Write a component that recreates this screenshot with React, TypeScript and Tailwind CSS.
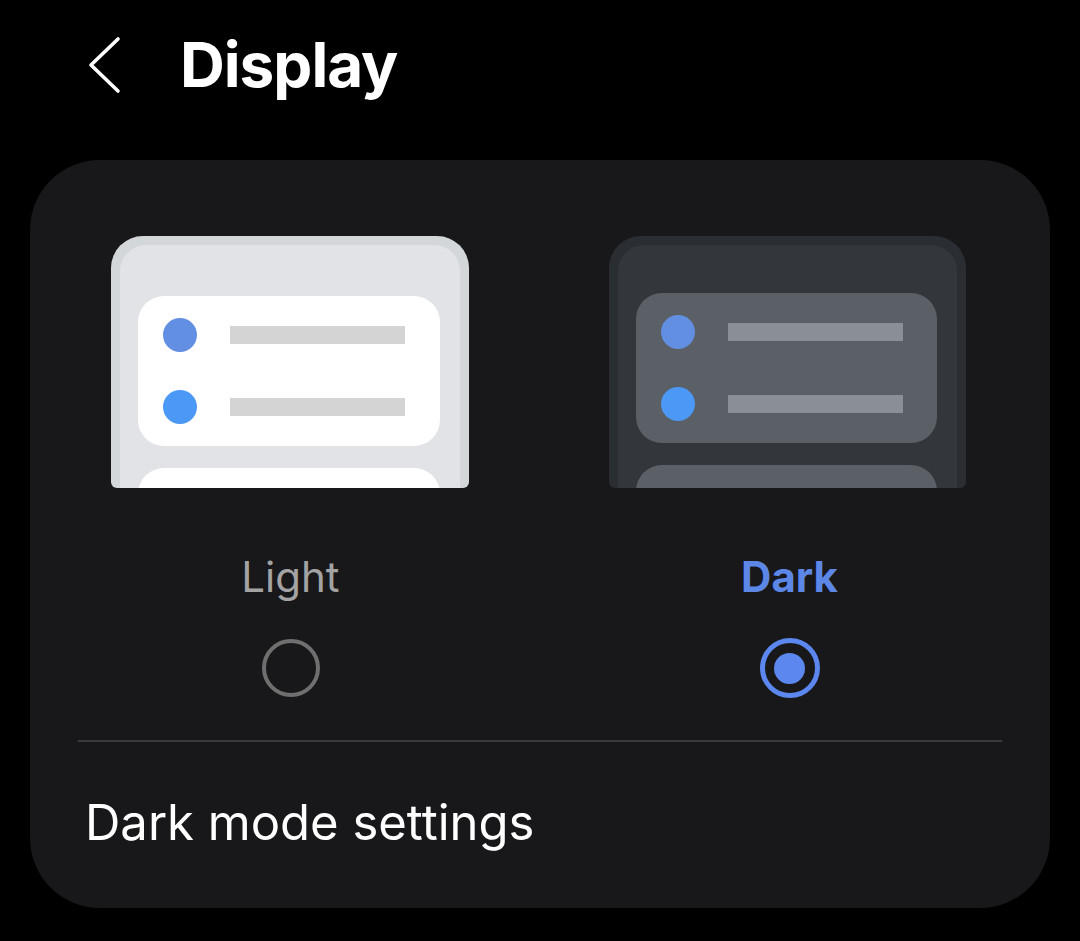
import React from "react";

const font = { fontFamily: "Inter, 'Noto Sans', sans-serif" };

function Preview({ dark }: { dark?: boolean }) {
  const frame = dark ? "bg-[#2a2e32]" : "bg-[#d4d7da]";
  const inner = dark ? "bg-[#33373b]" : "bg-[#e1e3e6]";
  const card = dark ? "bg-[#5b6067]" : "bg-white";
  const bar = dark ? "bg-[#8a8f95]" : "bg-[#d4d4d4]";
  return (
    <div
      className={`h-[252px] overflow-hidden rounded-t-[32px] rounded-b-[6px] px-[9px] pt-[9px] ${
        dark ? "w-[357px] mr-[4px]" : "w-[358px] mr-[2px]"
      } ${frame}`}
    >
      <div className={`h-full rounded-t-[26px] pl-[18px] pr-[20px] ${dark ? "pt-[48px]" : "pt-[51px]"} ${inner}`}>
        <div className={`rounded-[26px] px-[25px] py-[22px] flex flex-col gap-[38px] ${card}`}>
          <div className="flex items-center gap-[33px]">
            <div className="w-[34px] h-[34px] rounded-full bg-[#628fe2]" />
            <div className={`w-[175px] h-[18px] ${bar}`} />
          </div>
          <div className="flex items-center gap-[33px]">
            <div className="w-[34px] h-[34px] rounded-full bg-[#4b98f6]" />
            <div className={`w-[175px] h-[18px] ${bar}`} />
          </div>
        </div>
        <div className={`mt-[22px] h-[80px] rounded-t-[26px] ${card}`} />
      </div>
    </div>
  );
}

export default function App() {
  return (
    <div className="w-[1080px] h-[941px] bg-black text-white overflow-hidden" style={font}>
      <div className="h-[130px] flex items-center pl-[88px]">
        <svg width="34" height="58" viewBox="0 0 34 58" fill="none">
          <path d="M30 3 L3 29 L30 55" stroke="white" strokeWidth="3.6" strokeLinecap="round" strokeLinejoin="round" />
        </svg>
        <h1 className="ml-[58px] text-[62px] leading-none font-bold tracking-[-1px]">Display</h1>
      </div>

      <div className="mx-[30px] mt-[30px] rounded-[70px] bg-[#18181a] pt-[76px] pb-[61px]">
        <div className="grid grid-cols-2 px-[11px]">
          <div className="flex flex-col items-center">
            <Preview />
            <span className="mt-[68px] text-[42px] leading-none text-[#a3a3a3]">Light</span>
            <div className="mt-[40px] h-[60px] flex items-center">
              <div className="w-[58px] h-[58px] rounded-full border-[4px] border-[#6f6f6f]" />
            </div>
          </div>
          <div className="flex flex-col items-center">
            <Preview dark />
            <span className="mt-[68px] text-[42px] leading-none font-bold text-[#5d87e6]">Dark</span>
            <div className="mt-[40px] h-[60px] flex items-center">
              <div className="w-[60px] h-[60px] rounded-full border-[5px] border-[#5b87ee] flex items-center justify-center">
                <div className="w-[31px] h-[31px] rounded-full bg-[#5b87ee]" />
              </div>
            </div>
          </div>
        </div>

        <div className="mx-[48px] mt-[42px] h-[2px] bg-[#3a3a3c]" />

        <div className="mt-[56px] pl-[55px] text-[49px] leading-none text-white">Dark mode settings</div>
      </div>
    </div>
  );
}
